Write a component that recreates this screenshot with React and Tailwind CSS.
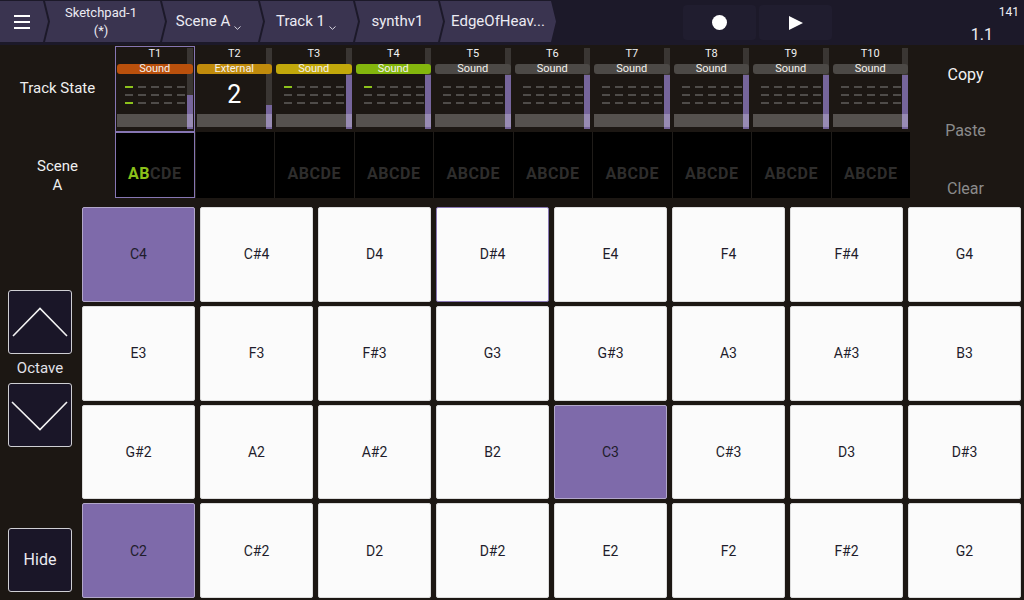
import React from 'react';

const tracks = [
  { n: 'T1', type: 'Sound', pill: 'bg-[#b9500c]', fill: 'h-[34px]', dashes: [[1,0,0,0,0],[0,0,0,0,0],[1,0,0,0,0]], sel: true, scene: 'AB' },
  { n: 'T2', type: 'External', pill: 'bg-[#c08b0c]', fill: 'h-[24px]', big: '2', empty: true },
  { n: 'T3', type: 'Sound', pill: 'bg-[#c2a80b]', fill: 'h-[54px]', dashes: [[1,0,0,0,0],[0,0,0,0,0],[0,0,0,0,0]] },
  { n: 'T4', type: 'Sound', pill: 'bg-[#83b60d]', fill: 'h-[54px]', dashes: [[1,0,0,0,0],[0,0,0,0,0],[0,0,0,0,0]] },
  { n: 'T5', type: 'Sound', pill: 'bg-[#4c4946]', fill: 'h-[54px]' },
  { n: 'T6', type: 'Sound', pill: 'bg-[#4c4946]', fill: 'h-[54px]' },
  { n: 'T7', type: 'Sound', pill: 'bg-[#4c4946]', fill: 'h-[54px]' },
  { n: 'T8', type: 'Sound', pill: 'bg-[#4c4946]', fill: 'h-[54px]' },
  { n: 'T9', type: 'Sound', pill: 'bg-[#4c4946]', fill: 'h-[54px]' },
  { n: 'T10', type: 'Sound', pill: 'bg-[#4c4946]', fill: 'h-[54px]' },
];

const zero = [[0,0,0,0,0],[0,0,0,0,0],[0,0,0,0,0]];

const pads = [
  ['C4', 'p'], ['C#4'], ['D4'], ['D#4', 'o'], ['E4'], ['F4'], ['F#4'], ['G4'],
  ['E3'], ['F3'], ['F#3'], ['G3'], ['G#3'], ['A3'], ['A#3'], ['B3'],
  ['G#2'], ['A2'], ['A#2'], ['B2'], ['C3', 'p'], ['C#3'], ['D3'], ['D#3'],
  ['C2', 'p'], ['C#2'], ['D2'], ['D#2'], ['E2'], ['F2'], ['F#2'], ['G2'],
];

function Chev() {
  return (
    <svg width="7" height="4" viewBox="0 0 7 4" className="mt-[13px] ml-[4px]">
      <polyline points="0.5,0.5 3.5,3.3 6.5,0.5" fill="none" stroke="#d8d6e2" strokeWidth="1" />
    </svg>
  );
}

function TrackCell({ t }) {
  const dashes = t.dashes || zero;
  return (
    <div className="relative h-[86px]">
      <div className="absolute right-[2px] top-[2px] bottom-[3px] w-[6px] bg-[#3a3633] flex flex-col justify-end">
        <div className={`${t.fill} bg-[#76659b]`} />
      </div>
      <div className="relative flex flex-col px-[2px] pt-[1px] h-full">
        <div className="h-[14px] flex items-center justify-center text-[11px] leading-[14px] text-[#f2f2f2]">{t.n}</div>
        <div className={`mt-[3px] h-[10px] rounded-[3px] ${t.pill} flex items-center justify-center text-[11px] leading-[10px] text-[#f4f1ec]`}>{t.type}</div>
        {t.big ? (
          <div className="h-[40px] flex items-center justify-center text-[25px] leading-none text-white">{t.big}</div>
        ) : (
          <div className="h-[40px] pt-[12px] pl-[8px] flex flex-col gap-[6px]">
            {dashes.map((row, i) => (
              <div key={i} className="flex gap-[5px]">
                {row.map((d, j) => (
                  <div key={j} className={`w-[8px] h-[2px] ${d ? 'bg-[#8cc21c]' : 'bg-[#4f4c49]'}`} />
                ))}
              </div>
            ))}
          </div>
        )}
        <div className="h-[13px] bg-white/25" />
      </div>
      {t.sel && <div className="absolute inset-0 border border-[#8676b3]" />}
    </div>
  );
}

function SceneCell({ t, i }) {
  return (
    <div className={`relative h-[66px] flex justify-center pt-[33px] ${i > 0 ? 'border-l border-[#1f1c19]' : ''}`}>
      {!t.empty && (
        <div className="text-[16px] leading-[18px] font-bold tracking-[0.5px]">
          {t.scene ? (
            <>
              <span className="text-[#8bc01a]">AB</span>
              <span className="text-[#2e2d2c]">CDE</span>
            </>
          ) : (
            <span className="text-[#2e2d2c]">ABCDE</span>
          )}
        </div>
      )}
      {t.sel && <div className="absolute inset-0 border border-[#8676b3]" />}
    </div>
  );
}

export default function App() {
  return (
    <div className="w-[1024px] h-[600px] overflow-hidden bg-[#1c1713] font-['Roboto',sans-serif] flex flex-col select-none">
      {/* Header */}
      <header className="h-[45px] shrink-0 bg-[#1c1929] flex items-start">
        <div className="flex mt-[1px] text-[#ecebf3]">
          <div className="w-[48px] h-[41px] bg-[#3a3450] flex items-center justify-center pr-[5px] [clip-path:polygon(0_0,calc(100%_-_5px)_0,100%_50%,calc(100%_-_5px)_100%,0_100%)]">
            <div className="flex flex-col gap-[4px]">
              <div className="w-[16px] h-[2px] bg-white" />
              <div className="w-[16px] h-[2px] bg-white" />
              <div className="w-[16px] h-[2px] bg-white" />
            </div>
          </div>
          <div className="-ml-[3px] w-[120px] h-[41px] bg-[#3a3450] flex flex-col items-center justify-center pr-[8px] text-[13px] leading-[18px] [clip-path:polygon(0_0,calc(100%_-_5px)_0,100%_50%,calc(100%_-_5px)_100%,0_100%,5px_50%)]">
            <span>Sketchpad-1</span>
            <span>(*)</span>
          </div>
          <div className="-ml-[3px] w-[101px] h-[41px] bg-[#3a3450] flex items-center justify-center pr-[8px] text-[15px] [clip-path:polygon(0_0,calc(100%_-_5px)_0,100%_50%,calc(100%_-_5px)_100%,0_100%,5px_50%)]">
            <span>Scene A</span>
            <Chev />
          </div>
          <div className="-ml-[3px] w-[98px] h-[41px] bg-[#3a3450] flex items-center justify-center pr-[6px] text-[15px] [clip-path:polygon(0_0,calc(100%_-_5px)_0,100%_50%,calc(100%_-_5px)_100%,0_100%,5px_50%)]">
            <span>Track 1</span>
            <Chev />
          </div>
          <div className="-ml-[3px] w-[88px] h-[41px] bg-[#3a3450] flex items-center justify-center pr-[3px] text-[15px] [clip-path:polygon(0_0,calc(100%_-_5px)_0,100%_50%,calc(100%_-_5px)_100%,0_100%,5px_50%)]">
            <span>synthv1</span>
          </div>
          <div className="-ml-[3px] w-[116px] h-[41px] bg-[#3a3450] flex items-center justify-center text-[15px] [clip-path:polygon(0_0,calc(100%_-_5px)_0,100%_50%,calc(100%_-_5px)_100%,0_100%,5px_50%)]">
            <span>EdgeOfHeav...</span>
          </div>
        </div>
        <div className="ml-[127px] mt-[5px] flex gap-[3px]">
          <div className="w-[73px] h-[35px] rounded-[4px] bg-[#201d2f] flex items-center justify-center">
            <div className="w-[15px] h-[15px] rounded-full bg-white" />
          </div>
          <div className="w-[73px] h-[35px] rounded-[4px] bg-[#201d2f] flex items-center justify-center">
            <svg width="14" height="14" viewBox="0 0 14 14">
              <polygon points="0,0 14,7 0,14" fill="#ffffff" />
            </svg>
          </div>
        </div>
        <div className="flex-1 flex flex-col items-end text-[#eeeef4]">
          <div className="mt-[5px] pr-[5px] text-[12px] leading-[14px]">141</div>
          <div className="mt-[6px] pr-[31px] text-[16px] leading-[19px]">1.1</div>
        </div>
      </header>

      {/* Track state + scene */}
      <div className="h-[162px] shrink-0 flex">
        <div className="w-[115px] flex flex-col text-[15px] text-[#efefef]">
          <div className="h-[87px] flex items-center justify-center">Track State</div>
          <div className="h-[66px] flex flex-col items-center pt-[25px] leading-[19px]">
            <span>Scene</span>
            <span>A</span>
          </div>
        </div>
        <div className="w-[795px] flex flex-col pt-[1px]">
          <div className="grid grid-cols-10 h-[86px]">
            {tracks.map((t) => (
              <TrackCell key={t.n} t={t} />
            ))}
          </div>
          <div className="grid grid-cols-10 h-[66px] bg-black">
            {tracks.map((t, i) => (
              <SceneCell key={t.n} t={t} i={i} />
            ))}
          </div>
        </div>
        <div className="flex-1 flex flex-col items-center pt-[20px] pr-[3px] text-[16px] leading-[19px]">
          <div className="text-[#f2f2f2]">Copy</div>
          <div className="mt-[37px] text-[#8b8b8b]">Paste</div>
          <div className="mt-[39px] text-[#8b8b8b]">Clear</div>
        </div>
      </div>

      {/* Pads */}
      <div className="flex-1 flex">
        <div className="w-[82px] shrink-0 flex flex-col pl-[8px] pt-[83px]">
          <div className="w-[64px] h-[64px] rounded-[3px] border border-[#cfcfd4] bg-[#1a1628] flex items-center justify-center">
            <svg width="62" height="62" viewBox="0 0 62 62">
              <polyline points="4,45 31,17.5 58,45" fill="none" stroke="#f2f2f2" strokeWidth="1.6" />
            </svg>
          </div>
          <div className="h-[29px] w-[64px] flex items-center justify-center text-[15px] text-[#e2e2ea]">Octave</div>
          <div className="w-[64px] h-[64px] rounded-[3px] border border-[#cfcfd4] bg-[#1a1628] flex items-center justify-center">
            <svg width="62" height="62" viewBox="0 0 62 62">
              <polyline points="3,18 31,45.5 58,18" fill="none" stroke="#f2f2f2" strokeWidth="1.6" />
            </svg>
          </div>
          <div className="mt-[81px] w-[64px] h-[64px] rounded-[3px] border border-[#cfcfd4] bg-[#1a1628] flex items-center justify-center text-[16px] text-[#ececf2]">Hide</div>
        </div>
        <div className="w-[939px] h-[391px] grid grid-cols-8 grid-rows-4 gap-x-[5px] gap-y-[4px]">
          {pads.map(([n, k]) => (
            <div
              key={n}
              className={`rounded-[2px] border flex items-center justify-center pt-[1px] text-[14px] text-[#1f1d2c] ${
                k === 'p'
                  ? 'bg-[#7e6aaa] border-[#b2a7ca]'
                  : k === 'o'
                  ? 'bg-[#fbfbfb] border-[#8878b4]'
                  : 'bg-[#fbfbfb] border-[#dcdcdc]'
              }`}
            >
              {n}
            </div>
          ))}
        </div>
      </div>
    </div>
  );
}
